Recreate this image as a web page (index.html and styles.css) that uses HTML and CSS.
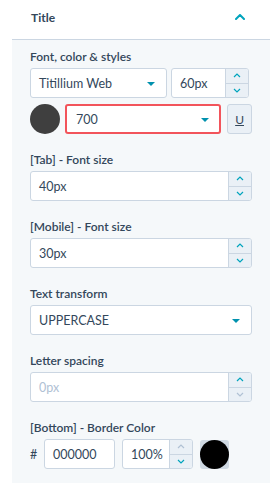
FILE: index.html
```html
<!DOCTYPE html>
<html>
<head>
<meta charset="utf-8">
<link rel="stylesheet" href="styles.css">
</head>
<body>
<div class="header">
  <span class="title">Title</span>
  <svg class="chev" width="10" height="6" viewBox="0 0 10 6"><path d="M1 5 L5 1 L9 5" fill="none" stroke="#00a4bd" stroke-width="2" stroke-linecap="round" stroke-linejoin="round"/></svg>
</div>
<div class="panel">
  <div class="group">
    <div class="label">Font, color &amp; styles</div>
    <div class="row">
      <div class="select font-select"><span>Titillium Web</span><i class="caret"></i></div>
      <div class="number small">
        <span class="val">60px</span>
        <div class="spin"><div class="btn"><svg width="8" height="5" viewBox="0 0 8 5"><path d="M1 4 L4 1 L7 4" fill="none" stroke="#00a4bd" stroke-width="1.2"/></svg></div><div class="btn"><svg width="8" height="5" viewBox="0 0 8 5"><path d="M1 1 L4 4 L7 1" fill="none" stroke="#00a4bd" stroke-width="1.2"/></svg></div></div>
      </div>
    </div>
    <div class="row row2">
      <div class="dot"></div>
      <div class="select weight error"><span>700</span><i class="caret"></i></div>
      <div class="ubtn"><span>U</span></div>
    </div>
  </div>

  <div class="group">
    <div class="label">[Tab] - Font size</div>
    <div class="number">
      <span class="val">40px</span>
      <div class="spin"><div class="btn"><svg width="8" height="5" viewBox="0 0 8 5"><path d="M1 4 L4 1 L7 4" fill="none" stroke="#00a4bd" stroke-width="1.2"/></svg></div><div class="btn"><svg width="8" height="5" viewBox="0 0 8 5"><path d="M1 1 L4 4 L7 1" fill="none" stroke="#00a4bd" stroke-width="1.2"/></svg></div></div>
    </div>
  </div>

  <div class="group">
    <div class="label">[Mobile] - Font size</div>
    <div class="number">
      <span class="val">30px</span>
      <div class="spin"><div class="btn"><svg width="8" height="5" viewBox="0 0 8 5"><path d="M1 4 L4 1 L7 4" fill="none" stroke="#00a4bd" stroke-width="1.2"/></svg></div><div class="btn"><svg width="8" height="5" viewBox="0 0 8 5"><path d="M1 1 L4 4 L7 1" fill="none" stroke="#00a4bd" stroke-width="1.2"/></svg></div></div>
    </div>
  </div>

  <div class="group">
    <div class="label">Text transform</div>
    <div class="select full"><span>UPPERCASE</span><i class="caret"></i></div>
  </div>

  <div class="group">
    <div class="label">Letter spacing</div>
    <div class="number">
      <span class="val placeholder">0px</span>
      <div class="spin"><div class="btn"><svg width="8" height="5" viewBox="0 0 8 5"><path d="M1 4 L4 1 L7 4" fill="none" stroke="#00a4bd" stroke-width="1.2"/></svg></div><div class="btn"><svg width="8" height="5" viewBox="0 0 8 5"><path d="M1 1 L4 4 L7 1" fill="none" stroke="#b0c1d4" stroke-width="1.2"/></svg></div></div>
    </div>
  </div>

  <div class="group">
    <div class="label">[Bottom] - Border Color</div>
    <div class="row row3">
      <span class="hash">#</span>
      <div class="hex">000000</div>
      <div class="number pct">
        <span class="val">100%</span>
        <div class="spin"><div class="btn"><svg width="8" height="5" viewBox="0 0 8 5"><path d="M1 4 L4 1 L7 4" fill="none" stroke="#b0c1d4" stroke-width="1.2"/></svg></div><div class="btn"><svg width="8" height="5" viewBox="0 0 8 5"><path d="M1 1 L4 4 L7 1" fill="none" stroke="#00a4bd" stroke-width="1.2"/></svg></div></div>
      </div>
      <div class="swatch"><div class="circle"></div></div>
    </div>
  </div>
</div>
</body>
</html>
```

FILE: styles.css
```css
* { box-sizing: border-box; }
html, body {
  margin: 0;
  padding: 0;
  background: #ffffff;
  font-family: "Lato", "Noto Sans", sans-serif;
  color: #33475b;
}
body { width: 274px; height: 483px; overflow: hidden; }

.header {
  height: 39px;
  display: flex;
  align-items: center;
  justify-content: space-between;
  padding: 0 25px 0 31px;
  margin-right: 4px;
}
.title {
  font-size: 12px;
  font-weight: 700;
  margin-top: -4px;
}
.chev { margin-top: -5px; }

.panel {
  margin-left: 12px;
  margin-right: 4px;
  background: #f5f8fa;
  border-top: 1px solid #cbd6e2;
  padding: 9px 18px 20px 18px;
  display: flex;
  flex-direction: column;
  gap: 18px;
}

.group {
  display: flex;
  flex-direction: column;
}
.label {
  font-size: 12px;
  font-weight: 600;
  line-height: 16px;
  margin-bottom: 3px;
}

.row { display: flex; gap: 4px; }
.row2 { margin-top: 6px; align-items: center; gap: 5px; }

.select {
  height: 30px;
  background: #fff;
  border: 1px solid #cbd6e2;
  border-radius: 3px;
  display: flex;
  align-items: center;
  justify-content: space-between;
  padding: 0 11px 0 8px;
  font-size: 12.5px;
}
.caret {
  width: 0; height: 0;
  border-left: 4px solid transparent;
  border-right: 4px solid transparent;
  border-top: 4px solid #0091ae;
  margin-top: 2px;
}
.font-select { width: 137px; }
.weight { width: 157px; padding-left: 9px; padding-right: 10px; }
.error { border: 2px solid #f2545b; }
.full { width: 222px; }

.number {
  height: 30px;
  width: 222px;
  display: flex;
  background: #fff;
  border: 1px solid #cbd6e2;
  border-radius: 3px;
  overflow: hidden;
}
.number .val {
  flex: 1;
  display: flex;
  align-items: center;
  padding-left: 8px;
  font-size: 12.5px;
}
.placeholder { color: #b0c1d4; }
.spin {
  width: 23px;
  display: flex;
  flex-direction: column;
  background: #eaf0f6;
  border-left: 1px solid #cbd6e2;
}
.btn {
  flex: 1;
  display: flex;
  align-items: center;
  justify-content: center;
}
.btn + .btn { border-top: 1px solid #cbd6e2; }
.small { width: 78px; }

.dot {
  width: 30px; height: 30px;
  border-radius: 50%;
  background: #3f3f3f;
  flex: none;
}
.ubtn {
  width: 25px; height: 30px;
  margin-left: 1px;
  background: #eaf0f6;
  border: 1px solid #cbd6e2;
  border-radius: 3px;
  display: flex;
  align-items: center;
  justify-content: center;
  font-size: 12px;
  text-decoration: underline;
}

.row3 { align-items: center; gap: 0; }
.hash { font-size: 12.5px; width: 14px; }
.hex {
  width: 71px; height: 30px;
  background: #fff;
  border: 1px solid #cbd6e2;
  border-radius: 3px;
  display: flex;
  align-items: center;
  padding-left: 8px;
  font-size: 12.5px;
}
.pct { width: 71px; margin-left: 7px; }
.swatch {
  width: 29px; height: 29px;
  margin-left: 7px;
  background: #cfd9e3;
  border-radius: 3px;
  position: relative;
}
.circle {
  position: absolute;
  inset: 0;
  border-radius: 50%;
  background: #000;
}
```
